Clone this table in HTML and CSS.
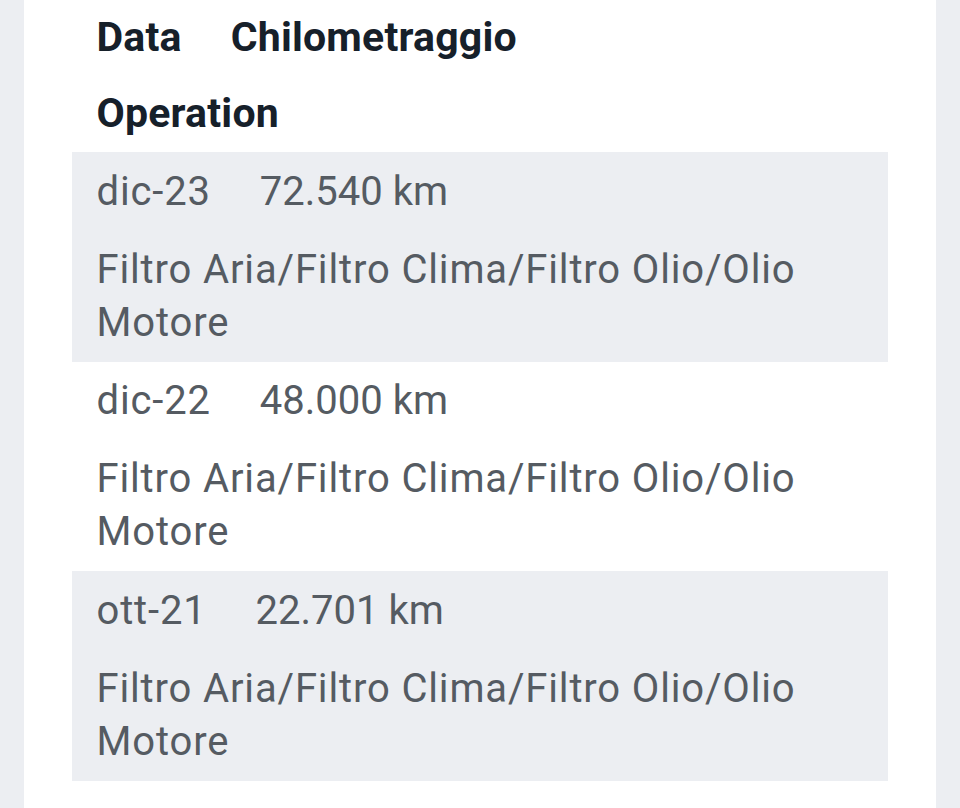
FILE: index.html
```html
<!DOCTYPE html>
<html lang="it">
<head>
<meta charset="utf-8">
<title>Manutenzioni</title>
<link rel="stylesheet" href="styles.css">
</head>
<body>
<main class="card">
  <div class="table">
    <div class="row head">
      <div class="cell">Data</div>
      <div class="cell">Chilometraggio</div>
      <div class="cell wide">Operation</div>
    </div>
    <div class="row odd">
      <div class="cell">dic-23</div>
      <div class="cell km">72.540 km</div>
      <div class="cell wide">Filtro Aria/Filtro Clima/Filtro Olio/Olio Motore</div>
    </div>
    <div class="row">
      <div class="cell">dic-22</div>
      <div class="cell km">48.000 km</div>
      <div class="cell wide">Filtro Aria/Filtro Clima/Filtro Olio/Olio Motore</div>
    </div>
    <div class="row odd">
      <div class="cell">ott-21</div>
      <div class="cell km">22.701 km</div>
      <div class="cell wide">Filtro Aria/Filtro Clima/Filtro Olio/Olio Motore</div>
    </div>
  </div>
</main>
</body>
</html>
```
FILE: styles.css
```css
html, body {
  margin: 0;
  padding: 0;
  background: #eceef2;
  height: 100%;
}
body {
  padding: 0 24px;
  font-family: Roboto, "Noto Sans", sans-serif;
}
.card {
  background: #ffffff;
  min-height: 808px;
  padding: 0 48px 40px;
  box-sizing: border-box;
}
.table {
  display: flex;
  flex-direction: column;
}
.row {
  display: flex;
  flex-wrap: wrap;
}
.row.odd {
  background: #eceef2;
}
.cell {
  padding: 12.5px 24.5px 12.75px;
  font-size: 40px;
  line-height: 53px;
  color: #555b62;
  letter-spacing: 0.85px;
}
.cell.km {
  letter-spacing: 0;
}
.cell.wide {
  flex: 0 0 100%;
  box-sizing: border-box;
}
.head .cell {
  font-weight: 700;
  color: #16202a;
  font-size: 41px;
  letter-spacing: 0.2px;
  line-height: 52px;
  padding: 11px 24.5px 13px;
}
```
